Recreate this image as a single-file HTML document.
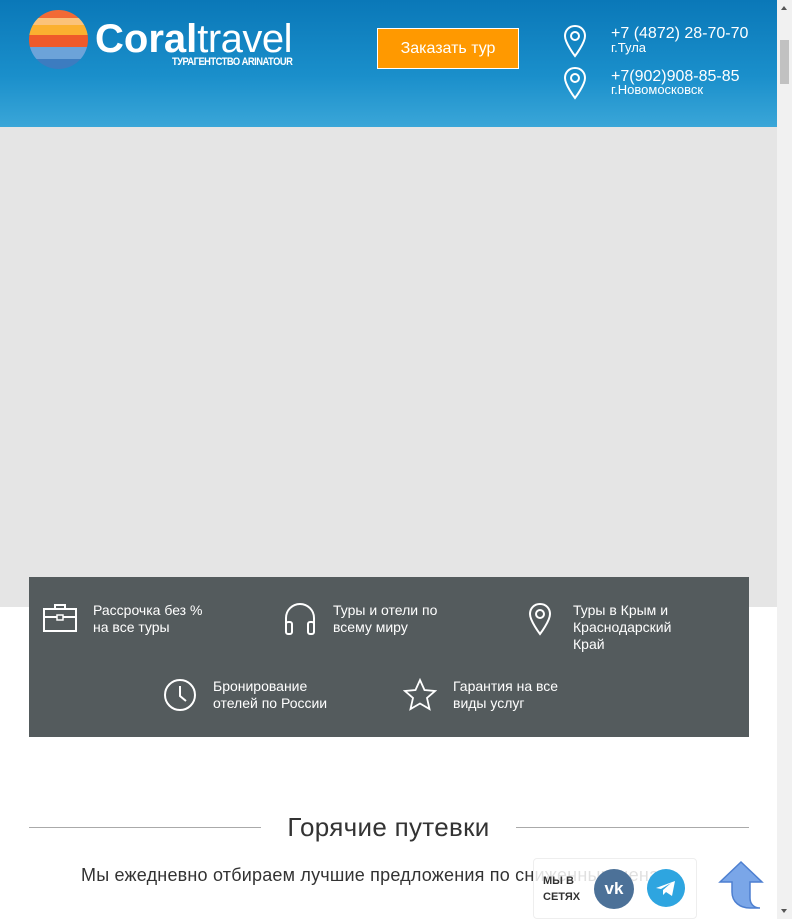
<!DOCTYPE html><html><head><meta charset="utf-8"><style>
*{margin:0;padding:0;box-sizing:border-box}
body{width:792px;height:919px;overflow:hidden;font-family:"Liberation Sans","DejaVu Sans",sans-serif;background:#fff;position:relative}
.hdr{position:absolute;left:0;top:0;width:777px;height:127px;background:linear-gradient(180deg,#0a78b8 0%,#1a8fcb 60%,#3aa6d8 100%)}
.gray{position:absolute;left:0;top:127px;width:777px;height:480px;background:#e5e5e5}
.sb{position:absolute;right:0;top:0;width:15px;height:919px;background:#f1f1f1}
.thumb{position:absolute;right:3px;top:40px;width:9px;height:44px;background:#c1c1c1;border-radius:0}
.panel{position:absolute;left:29px;top:577px;width:720px;height:160px;background:#545b5d;color:#fff;font-size:14px;line-height:17px}
.it{position:absolute;display:flex;gap:16px;align-items:flex-start}
.it svg{flex:none}
.w{color:#fff}
</style></head><body>
<div class="hdr">
<svg style="position:absolute;left:29px;top:10px" width="59" height="59" viewBox="0 0 59 59"><defs><clipPath id="c"><circle cx="29.5" cy="29.5" r="29.5"/></clipPath></defs><g clip-path="url(#c)"><rect width="59" height="8" fill="#f26a35"/><rect y="8" width="59" height="7" fill="#fbc27a"/><rect y="15" width="59" height="10" fill="#fbb030"/><rect y="25" width="59" height="12" fill="#ef5a2a"/><rect y="37" width="59" height="12" fill="#6ca3d9"/><rect y="49" width="59" height="10" fill="#3c7cc0"/></g></svg>
<div style="position:absolute;left:95px;top:15px;color:#fff;font-size:40px;line-height:48px;letter-spacing:0px"><b>Coral</b><span style="font-weight:300;letter-spacing:-0.5px">travel</span></div>
<div style="position:absolute;left:172px;top:56px;color:#fff;font-size:11px;font-weight:bold;letter-spacing:-0.6px;transform:scaleX(0.85);transform-origin:left">ТУРАГЕНТСТВО ARINATOUR</div>
<div style="position:absolute;left:377px;top:28px;width:142px;height:41px;background:#ff9900;border:1px solid #fff;color:#fff;font-size:16px;text-align:center;line-height:39px">Заказать тур</div>
<svg style="position:absolute;left:563px;top:24px" width="24" height="34" viewBox="0 0 24 34"><path d="M12 2C6 2 2 6.5 2 12c0 7 10 20 10 20s10-13 10-20C22 6.5 18 2 12 2z" fill="none" stroke="#fff" stroke-width="2"/><circle cx="12" cy="12" r="4" fill="none" stroke="#fff" stroke-width="2"/></svg>
<svg style="position:absolute;left:563px;top:66px" width="24" height="34" viewBox="0 0 24 34"><path d="M12 2C6 2 2 6.5 2 12c0 7 10 20 10 20s10-13 10-20C22 6.5 18 2 12 2z" fill="none" stroke="#fff" stroke-width="2"/><circle cx="12" cy="12" r="4" fill="none" stroke="#fff" stroke-width="2"/></svg>
<div class="w" style="position:absolute;left:611px;top:25px;font-size:16px;line-height:18px">+7 (4872) 28-70-70</div>
<div class="w" style="position:absolute;left:611px;top:40px;font-size:13px">г.Тула</div>
<div class="w" style="position:absolute;left:611px;top:68px;font-size:16px;line-height:18px">+7(902)908-85-85</div>
<div class="w" style="position:absolute;left:611px;top:82px;font-size:13px">г.Новомосковск</div>
</div>
<div class="gray"></div>
<div class="panel">
<div class="it" style="left:14px;top:25px"><svg width="34" height="32" viewBox="0 0 34 32"><rect x="1" y="7" width="32" height="22" fill="none" stroke="#fff" stroke-width="2"/><path d="M12 7V3h10v4M1 15h32" fill="none" stroke="#fff" stroke-width="2"/><rect x="14" y="13" width="6" height="5" fill="#545b5d" stroke="#fff" stroke-width="1.5"/></svg><div>Рассрочка без %<br>на все туры</div></div>
<div class="it" style="left:254px;top:25px"><svg width="34" height="34" viewBox="0 0 34 34"><path d="M3 24V16a14 14 0 0 1 28 0v8" fill="none" stroke="#fff" stroke-width="2"/><rect x="3" y="20" width="6" height="12" rx="2" fill="none" stroke="#fff" stroke-width="2"/><rect x="25" y="20" width="6" height="12" rx="2" fill="none" stroke="#fff" stroke-width="2"/></svg><div>Туры и отели по<br>всему миру</div></div>
<div class="it" style="left:494px;top:25px"><svg width="34" height="34" viewBox="0 0 24 34"><path d="M12 2C6 2 2 6.5 2 12c0 7 10 20 10 20s10-13 10-20C22 6.5 18 2 12 2z" fill="none" stroke="#fff" stroke-width="2"/><circle cx="12" cy="12" r="4" fill="none" stroke="#fff" stroke-width="2"/></svg><div>Туры в Крым и<br>Краснодарский<br>Край</div></div>
<div class="it" style="left:134px;top:101px"><svg width="34" height="34" viewBox="0 0 34 34"><circle cx="17" cy="17" r="15" fill="none" stroke="#fff" stroke-width="2"/><path d="M17 8v10l6 5" fill="none" stroke="#fff" stroke-width="2"/></svg><div>Бронирование<br>отелей по России</div></div>
<div class="it" style="left:374px;top:101px"><svg width="34" height="34" viewBox="0 0 34 34"><path d="M17 2l4.5 10 10.5 1-8 7 2.5 11L17 25.5 7.5 31 10 20 2 13l10.5-1z" fill="none" stroke="#fff" stroke-width="1.8"/></svg><div>Гарантия на все<br>виды услуг</div></div>
</div>
<div style="position:absolute;left:29px;top:827px;width:232px;height:1px;background:#aaa"></div>
<div style="position:absolute;left:516px;top:827px;width:233px;height:1px;background:#aaa"></div>
<div style="position:absolute;left:261px;top:812px;width:255px;text-align:center;font-size:26px;color:#333;letter-spacing:0.3px">Горячие путевки</div>
<div style="position:absolute;left:81px;top:865px;font-size:18px;color:#333;white-space:nowrap;letter-spacing:0.2px">Мы ежедневно отбираем лучшие предложения по сниженным ценам</div>
<div style="position:absolute;left:533px;top:858px;width:164px;height:61px;background:rgba(255,255,255,0.85);border:1px solid #eee;border-radius:4px"></div>
<div style="position:absolute;left:543px;top:873px;font-size:11px;font-weight:bold;color:#333;line-height:16px">МЫ В<br>СЕТЯХ</div>
<div style="position:absolute;left:594px;top:869px;width:40px;height:40px;border-radius:50%;background:#4c7198;color:#fff;font-weight:bold;font-size:17px;text-align:center;line-height:40px">vk</div>
<div style="position:absolute;left:647px;top:869px;width:38px;height:38px;border-radius:50%;background:#2ea5e0"><svg width="38" height="38" viewBox="0 0 38 38"><path d="M9 19l19-7-3 15-6-4-3 3 0-5 8-7-10 6z" fill="#fff"/></svg></div>
<svg style="position:absolute;left:716px;top:860px" width="50" height="50" viewBox="0 0 50 50"><path d="M25 2L4 22h12v10c0 10 8 16 18 16h10c-6 0-10-4-10-10V22h12z" fill="#7aa6e8" stroke="#4d7fd0" stroke-width="1.5"/></svg>
<div class="sb"><div class="thumb"></div><div style="position:absolute;left:4px;top:6px;border:3.5px solid transparent;border-bottom:4px solid #555;border-top:0"></div><div style="position:absolute;left:4px;bottom:6px;border:3.5px solid transparent;border-top:4px solid #555;border-bottom:0"></div></div>
</body></html>
